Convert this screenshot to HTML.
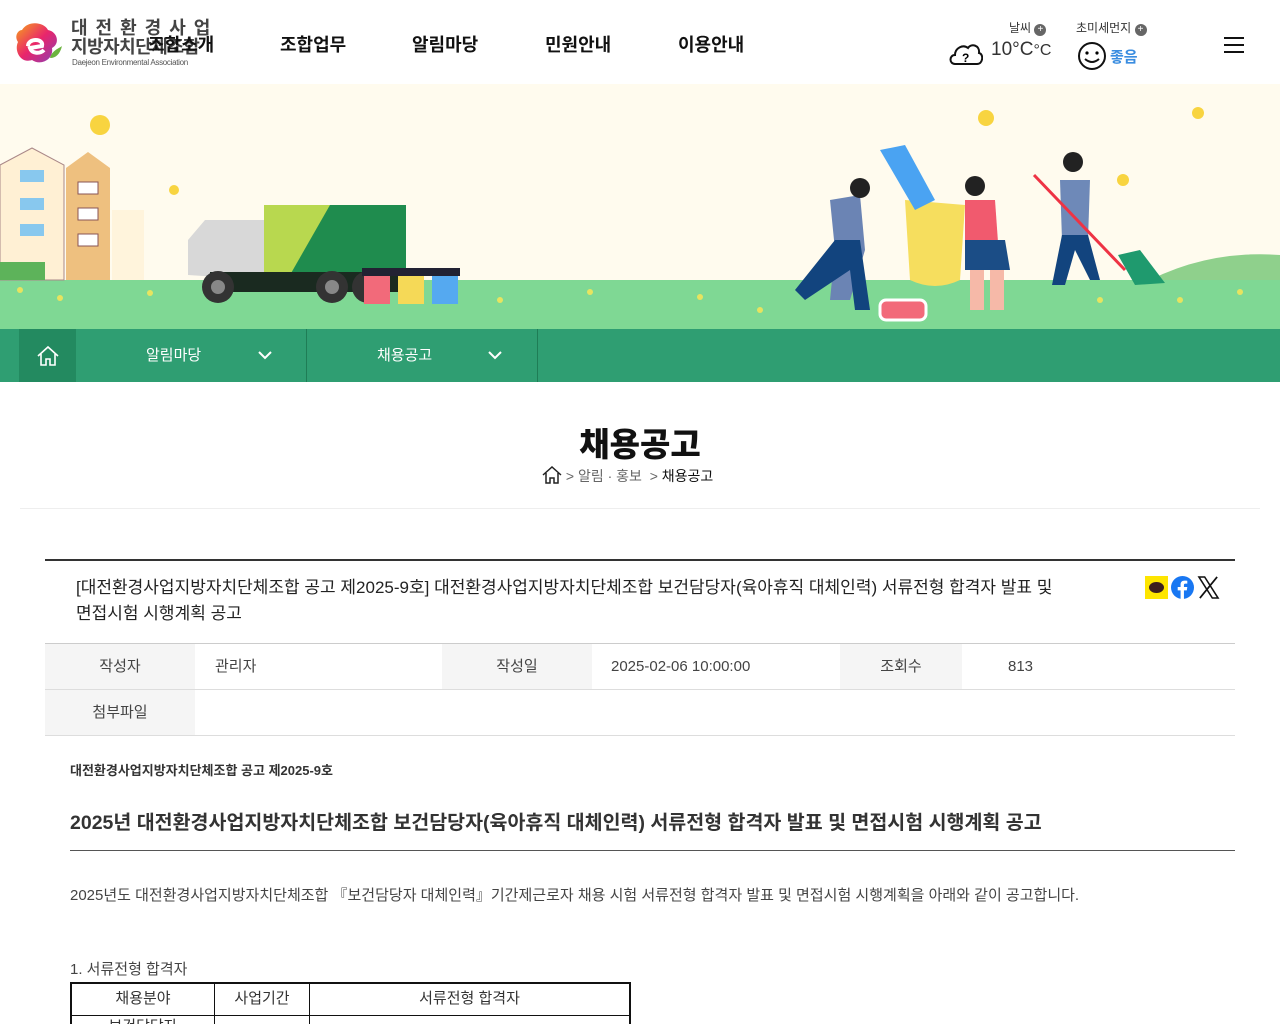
<!DOCTYPE html>
<html lang="ko"><head><meta charset="utf-8">
<style>
*{margin:0;padding:0;box-sizing:border-box}
html,body{width:1280px;height:1024px;overflow:hidden}
body{background:#fff;font-family:"Liberation Sans","Noto Sans CJK KR",sans-serif;color:#222;position:relative}
.abs{position:absolute}
.nav a{position:absolute;top:31px;font-size:18px;font-weight:bold;color:#111;text-decoration:none}
.banner{position:absolute;top:84px;left:0;width:1280px;height:246px;background:#fffbee;overflow:hidden}
.sub{position:absolute;top:329px;left:0;width:1280px;height:53px;background:#2f9e72}
.sub .t{position:absolute;top:15px;color:#fff;font-size:15px}
.meta{position:absolute;left:45px;width:1190px;border-bottom:1px solid #ddd;height:46px}
.meta .h{position:absolute;top:0;height:45px;background:#f5f5f5;width:150px;text-align:center;line-height:45px;font-size:15px;color:#444}
.meta .v{position:absolute;top:0;line-height:45px;font-size:15px;color:#444}
</style></head><body>
<svg class="abs" style="left:14px;top:20px" width="50" height="46" viewBox="0 0 50 46">
<defs><linearGradient id="lg" x1="0" y1="0" x2="1" y2="1"><stop offset="0" stop-color="#f7a21b"/><stop offset=".5" stop-color="#e9256b"/><stop offset="1" stop-color="#8b3fb5"/></linearGradient></defs>
<path d="M8 10 C14 0 30 2 34 10 C44 12 46 24 38 28 C40 40 26 46 18 40 C6 44 0 30 4 22 C0 16 4 10 8 10Z" fill="url(#lg)"/>
<path d="M14 26 C14 18 30 18 28 26 L16 28 C18 34 26 34 30 30" stroke="#fff" stroke-width="4" fill="none"/>
<path d="M36 38 C38 30 46 28 48 26 C46 34 42 38 36 38Z" fill="#6cb33f"/>
</svg>
<div class="abs" style="left:71px;top:18px;font-size:18px;font-weight:bold;color:#444;letter-spacing:1.5px;line-height:20px;white-space:nowrap">대 전 환 경 사 업</div>
<div class="abs" style="left:71px;top:37px;font-size:18px;font-weight:bold;color:#444;line-height:20px;letter-spacing:-0.5px">지방자치단체조합</div>
<div class="abs" style="left:72px;top:58px;font-size:8px;color:#555;letter-spacing:-0.3px">Daejeon Environmental Association</div>
<div class="nav">
<a style="left:148px">조합소개</a><a style="left:280px">조합업무</a><a style="left:412px">알림마당</a><a style="left:545px">민원안내</a><a style="left:678px">이용안내</a>
</div>
<div class="abs" style="left:1009px;top:19px;font-size:12px;color:#333">날씨 <span style="display:inline-block;width:12px;height:12px;border-radius:50%;background:#666;color:#fff;font-size:10px;line-height:12px;text-align:center">+</span></div>
<div class="abs" style="left:1076px;top:19px;font-size:12px;color:#333">초미세먼지 <span style="display:inline-block;width:12px;height:12px;border-radius:50%;background:#666;color:#fff;font-size:10px;line-height:12px;text-align:center">+</span></div>
<svg class="abs" style="left:949px;top:40px" width="34" height="26" viewBox="0 0 34 26"><path d="M6 24 C0 24 0 15 6 15 C6 8 14 4 19 8 C22 3 31 5 30 13 C35 14 34 24 28 24Z" fill="none" stroke="#111" stroke-width="2"/><text x="13" y="22" font-size="12" font-weight="bold" font-family="Liberation Sans">?</text></svg>
<div class="abs" style="left:991px;top:39px;font-size:19px;color:#333">10°C<span style="font-size:16px">°C</span></div>
<svg class="abs" style="left:1077px;top:41px" width="30" height="30" viewBox="0 0 30 30"><circle cx="15" cy="15" r="13" fill="none" stroke="#111" stroke-width="2"/><circle cx="10" cy="12" r="1.6"/><circle cx="20" cy="12" r="1.6"/><path d="M8 18 Q15 24 22 18" fill="none" stroke="#111" stroke-width="2"/></svg>
<div class="abs" style="left:1110px;top:46px;font-size:15px;font-weight:bold;color:#3a8de0">좋음</div>
<div class="abs" style="left:1224px;top:37px;width:20px;height:2px;background:#111;box-shadow:0 7px 0 #111,0 14px 0 #111"></div>
<div class="banner">
<svg width="1280" height="246" viewBox="0 84 1280 246">
<rect x="0" y="280" width="1280" height="50" fill="#7fd894"/>
<path d="M1150 280 Q1210 250 1280 255 L1280 280Z" fill="#8fd08c"/>
<path d="M0 280 V165 L32 148 L64 165 V280Z" fill="#fff0d4" stroke="#a88" stroke-width="1"/>
<path d="M66 280 V168 L88 152 L110 168 V280Z" fill="#eec07f"/>
<rect x="112" y="210" width="32" height="70" fill="#fff4dc"/>
<g fill="#88c8ee"><rect x="20" y="170" width="24" height="12"/><rect x="20" y="198" width="24" height="12"/><rect x="20" y="224" width="24" height="12"/></g>
<g fill="#fff" stroke="#855"><rect x="78" y="182" width="20" height="12"/><rect x="78" y="208" width="20" height="12"/><rect x="78" y="234" width="20" height="12"/></g>
<rect x="0" y="262" width="45" height="18" fill="#5db35a"/>
<path d="M188 275 V240 L205 220 H265 V280Z" fill="#d8d8d8"/>
<rect x="264" y="205" width="142" height="70" fill="#1f8c4e"/>
<path d="M264 205 H330 L290 275 H264Z" fill="#b8d84f"/>
<rect x="210" y="272" width="200" height="20" fill="#1a2a20"/>
<g fill="#333"><circle cx="218" cy="287" r="16"/><circle cx="332" cy="287" r="16"/><circle cx="368" cy="287" r="16"/></g>
<g fill="#888"><circle cx="218" cy="287" r="7"/><circle cx="332" cy="287" r="7"/></g>
<rect x="364" y="272" width="26" height="32" fill="#f26a7a"/><rect x="398" y="272" width="26" height="32" fill="#f5d957"/><rect x="432" y="272" width="26" height="32" fill="#55a9f0"/>
<rect x="362" y="268" width="98" height="8" fill="#223"/>
<path d="M905 200 L965 205 L960 280 Q935 292 910 280Z" fill="#f6de5e"/>
<path d="M880 150 L905 145 L935 200 L915 210Z" fill="#4aa3f2"/>
<path d="M830 200 L860 195 L865 250 L850 300 L830 300 L835 250Z" fill="#6b84b4"/>
<path d="M835 240 L860 240 L870 310 L855 310 L850 270 L805 300 L795 290Z" fill="#12447e"/>
<circle cx="860" cy="188" r="10" fill="#222"/>
<path d="M965 200 H995 L1000 270 H965Z" fill="#f15a6e"/><path d="M965 240 H1005 L1010 270 H965Z" fill="#1b4d86"/>
<rect x="970" y="270" width="14" height="40" fill="#f6b9a8"/><rect x="990" y="270" width="14" height="40" fill="#f6b9a8"/>
<circle cx="975" cy="186" r="10" fill="#222"/>
<path d="M1060 180 H1090 L1088 240 H1062Z" fill="#6e89b8"/><path d="M1062 235 H1088 L1100 280 H1090 L1075 250 L1065 285 H1052Z" fill="#12447e"/>
<circle cx="1073" cy="162" r="10" fill="#222"/>
<path d="M1034 175 L1125 270" stroke="#e34" stroke-width="3"/><path d="M1118 255 L1140 250 L1165 283 L1135 285Z" fill="#1f9a6e"/>
<rect x="880" y="300" width="46" height="20" rx="6" fill="#f26a7a" stroke="#fff" stroke-width="3"/>
<g fill="#f8d440"><circle cx="100" cy="125" r="10"/><circle cx="174" cy="190" r="5"/><circle cx="986" cy="118" r="8"/><circle cx="1198" cy="113" r="6"/><circle cx="1123" cy="180" r="6"/></g>
<g fill="#f3e55a" opacity=".9"><circle cx="20" cy="290" r="3"/><circle cx="60" cy="298" r="3"/><circle cx="150" cy="293" r="3"/><circle cx="500" cy="300" r="3"/><circle cx="590" cy="292" r="3"/><circle cx="700" cy="297" r="3"/><circle cx="760" cy="310" r="3"/><circle cx="1180" cy="300" r="3"/><circle cx="1240" cy="292" r="3"/><circle cx="1100" cy="300" r="3"/></g>
</svg>
</div>
<div class="sub">
<div class="abs" style="left:19px;top:0;width:57px;height:53px;background:#238a60"></div>
<svg class="abs" style="left:36px;top:16px" width="24" height="22" viewBox="0 0 24 22"><path d="M2 11 L12 2 L22 11 M5 9 V20 H10 V14 H14 V20 H19 V9" fill="none" stroke="#fff" stroke-width="1.6"/></svg>
<div class="abs" style="left:306px;top:0;width:1px;height:53px;background:#1f7d56"></div>
<div class="abs" style="left:537px;top:0;width:1px;height:53px;background:#1f7d56"></div>
<div class="t" style="left:146px">알림마당</div><div class="t" style="left:377px">채용공고</div>
<svg class="abs" style="left:258px;top:21px" width="14" height="10"><path d="M1 2 L7 8 L13 2" fill="none" stroke="#fff" stroke-width="2"/></svg>
<svg class="abs" style="left:488px;top:21px" width="14" height="10"><path d="M1 2 L7 8 L13 2" fill="none" stroke="#fff" stroke-width="2"/></svg>
</div>
<div class="abs" style="left:0;width:1280px;top:418px;text-align:center;font-size:33px;font-weight:900;color:#111">채용공고</div>
<div class="abs" style="left:542px;top:466px;font-size:14px;color:#666;white-space:nowrap">
<svg width="20" height="18" viewBox="0 0 20 18" style="vertical-align:-3px"><path d="M1 9 L10 1 L19 9 M4 7 V17 H8 V12 H12 V17 H16 V7" fill="none" stroke="#222" stroke-width="1.5"/></svg> &gt; 알림 · 홍보 &nbsp;&gt; <span style="color:#111">채용공고</span></div>
<div class="abs" style="left:20px;top:508px;width:1240px;height:1px;background:#eee"></div>
<div class="abs" style="left:45px;top:559px;width:1190px;height:2px;background:#333"></div>
<div class="abs" style="left:76px;top:575px;width:1040px;font-size:17px;line-height:26px;color:#222;word-break:keep-all">[대전환경사업지방자치단체조합 공고 제2025-9호] 대전환경사업지방자치단체조합 보건담당자(육아휴직 대체인력) 서류전형 합격자 발표 및 면접시험 시행계획 공고</div>
<div class="abs" style="left:1145px;top:576px;width:23px;height:23px;background:#fee500"><div style="margin:6px 4px;width:15px;height:11px;border-radius:50%;background:#3c1e1e"></div></div>
<svg class="abs" style="left:1171px;top:576px" width="23" height="23" viewBox="0 0 24 24"><circle cx="12" cy="12" r="12" fill="#1877f2"/><path d="M13.5 24 V15 H16.5 L17 11.5 H13.5 V9.5 C13.5 8.5 14 8 15 8 H17 V5 C16 4.9 15 4.8 14 4.8 C11.6 4.8 10 6.2 10 8.9 V11.5 H7 V15 H10 V24Z" fill="#fff"/></svg>
<svg class="abs" style="left:1197px;top:576px" width="23" height="23" viewBox="0 0 24 24"><path d="M2 1 H8 L22 23 H16Z" fill="none" stroke="#111" stroke-width="1.6"/><path d="M21 1 L3 23" stroke="#111" stroke-width="1.8"/></svg>
<div class="abs" style="left:45px;top:643px;width:1190px;height:1px;background:#ccc"></div>
<div class="meta" style="top:644px"><div class="h" style="left:0">작성자</div><div class="v" style="left:170px">관리자</div><div class="h" style="left:397px">작성일</div><div class="v" style="left:566px">2025-02-06 10:00:00</div><div class="h" style="left:795px;width:122px">조회수</div><div class="v" style="left:963px">813</div></div>
<div class="meta" style="top:690px"><div class="h" style="left:0">첨부파일</div></div>
<div class="abs" style="left:70px;top:760px;font-size:13px;font-weight:bold;color:#333">대전환경사업지방자치단체조합 공고 제2025-9호</div>
<div class="abs" style="left:70px;top:806px;font-size:19.5px;font-weight:bold;color:#333;white-space:nowrap">2025년 대전환경사업지방자치단체조합 보건담당자(육아휴직 대체인력) 서류전형 합격자 발표 및 면접시험 시행계획 공고</div>
<div class="abs" style="left:70px;top:850px;width:1165px;height:1px;background:#555"></div>
<div class="abs" style="left:70px;top:884px;font-size:15px;color:#444;white-space:nowrap">2025년도 대전환경사업지방자치단체조합 『보건담당자 대체인력』기간제근로자 채용 시험 서류전형 합격자 발표 및 면접시험 시행계획을 아래와 같이 공고합니다.</div>
<div class="abs" style="left:70px;top:958px;font-size:15px;color:#444">1. 서류전형 합격자</div>
<div class="abs" style="left:70px;top:982px;width:561px;height:60px;border:2px solid #111;border-bottom:none"></div>
<div class="abs" style="left:72px;top:1015px;width:557px;height:1px;background:#111"></div>
<div class="abs" style="left:214px;top:984px;width:1px;height:40px;background:#111"></div>
<div class="abs" style="left:309px;top:984px;width:1px;height:40px;background:#111"></div>
<div class="abs" style="left:72px;top:987px;width:142px;text-align:center;font-size:15px;color:#333">채용분야</div>
<div class="abs" style="left:215px;top:987px;width:94px;text-align:center;font-size:15px;color:#333">사업기간</div>
<div class="abs" style="left:310px;top:987px;width:319px;text-align:center;font-size:15px;color:#333">서류전형 합격자</div>
<div class="abs" style="left:72px;top:1015px;width:142px;text-align:center;font-size:15px;color:#333">보건담당자</div>
</body></html>
